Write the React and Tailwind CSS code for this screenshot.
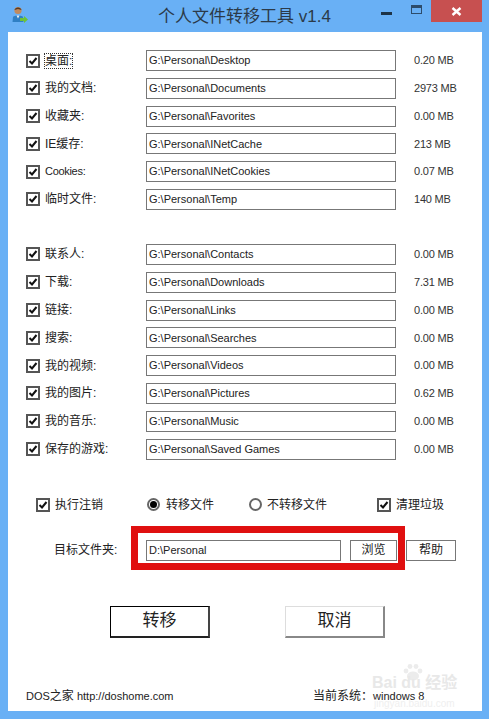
const CJK = "font-['Liberation_Sans','Noto_Sans_CJK_SC',sans-serif]";

const groupOne = [
  { label: "桌面:", path: "G:\\Personal\\Desktop", size: "0.20 MB", focused: true },
  { label: "我的文档:", path: "G:\\Personal\\Documents", size: "2973 MB" },
  { label: "收藏夹:", path: "G:\\Personal\\Favorites", size: "0.00 MB" },
  { label: "IE缓存:", path: "G:\\Personal\\INetCache", size: "213 MB" },
  { label: "Cookies:", path: "G:\\Personal\\INetCookies", size: "0.07 MB", latin: true },
  { label: "临时文件:", path: "G:\\Personal\\Temp", size: "140 MB" },
];

const groupTwo = [
  { label: "联系人:", path: "G:\\Personal\\Contacts", size: "0.00 MB" },
  { label: "下载:", path: "G:\\Personal\\Downloads", size: "7.31 MB" },
  { label: "链接:", path: "G:\\Personal\\Links", size: "0.00 MB" },
  { label: "搜索:", path: "G:\\Personal\\Searches", size: "0.00 MB" },
  { label: "我的视频:", path: "G:\\Personal\\Videos", size: "0.00 MB" },
  { label: "我的图片:", path: "G:\\Personal\\Pictures", size: "0.62 MB" },
  { label: "我的音乐:", path: "G:\\Personal\\Music", size: "0.00 MB" },
  { label: "保存的游戏:", path: "G:\\Personal\\Saved Games", size: "0.00 MB" },
];

function Check() {
  return (
    <span className="w-[14px] h-[14px] border-2 border-[#555] bg-white flex items-center justify-center shrink-0">
      <svg width="10" height="10" viewBox="0 0 10 10">
        <path d="M1.5 5 L4 7.5 L8.5 2" fill="none" stroke="#111" strokeWidth="2" />
      </svg>
    </span>
  );
}

function Radio({ on }) {
  return (
    <span className="w-[13px] h-[13px] rounded-full border-2 border-[#666] bg-white flex items-center justify-center shrink-0">
      {on && <span className="w-[7px] h-[7px] rounded-full bg-black" />}
    </span>
  );
}

function Row({ item }) {
  return (
    <div className="flex items-center h-[21px]">
      <Check />
      <span className={"ml-[5px] w-[101px] text-[#222] " + (item.latin ? "text-[11px] tracking-[-0.3px]" : "text-[12px]")}>
        <span className={item.focused ? "outline-1 outline-dotted outline-[#333]" : ""}>{item.label}</span>
      </span>
      <div className="w-[250px] h-[21px] border border-[#777] flex items-center pl-[2px] text-[11px] text-[#222]">
        {item.path}
      </div>
      <span className="ml-[18px] text-[11px] tracking-[-0.2px] text-[#333]">{item.size}</span>
    </div>
  );
}

export default function App() {
  return (
    <div className={"w-[489px] h-[719px] bg-[#69b0f5] flex flex-col overflow-hidden " + CJK}>
      {/* title bar */}
      <div className="h-[32px] shrink-0 flex items-start relative">
        <svg className="absolute left-[12px] top-[6px]" width="16" height="18" viewBox="0 0 16 18">
          <circle cx="6" cy="4.5" r="3.6" fill="#c08a5e" />
          <path d="M2.5 4 C3 0.5 9 0.5 9.5 4 L6 3 Z" fill="#5a3a22" />
          <path d="M0.5 16 L1 11 C2 9 10 9 11 11 L11.5 16 Z" fill="#2f7fc4" />
          <path d="M4.5 9.5 L6 12.5 L7.5 9.5 Z" fill="#f1f1f1" />
          <path d="M8 12 H12 V10 L16 13.5 L12 17 V15 H8 Z" fill="#6cc23a" />
        </svg>
        <div className="w-full text-center text-[17px] leading-none pt-[8px] text-[#2b3a49]">个人文件转移工具 v1.4</div>
        <span className="absolute left-[381px] top-[12px] w-[11px] h-[3px] bg-[#1d3346]" />
        <span className="absolute left-[411px] top-[5px] w-[11px] h-[9px] border border-[#2d4c6b] border-t-[3px]" />
        <span className="absolute left-[431px] top-0 w-[51px] h-[22px] bg-[#c75050] flex items-center justify-center">
          <svg width="11" height="9" viewBox="0 0 11 9">
            <path d="M1.5 1 L9.5 8 M9.5 1 L1.5 8" stroke="#fff" strokeWidth="2.4" />
          </svg>
        </span>
      </div>

      {/* client area */}
      <div className="relative ml-[8px] w-[474px] h-[679px] bg-white text-[12px] text-[#222]">
        <div className="pl-[18px] pt-[18px] flex flex-col gap-[6.8px]">
          {groupOne.map((item) => (
            <Row key={item.label} item={item} />
          ))}
        </div>
        <div className="pl-[18px] mt-[34px] flex flex-col gap-[6.8px]">
          {groupTwo.map((item) => (
            <Row key={item.label} item={item} />
          ))}
        </div>

        <div className="mt-[37px] h-[16px] flex items-center">
          <div className="ml-[28px] flex items-center gap-[5px]"><Check />执行注销</div>
          <div className="ml-[44px] flex items-center gap-[6px]"><Radio on />转移文件</div>
          <div className="ml-[35px] flex items-center gap-[5px]"><Radio />不转移文件</div>
          <div className="ml-[50px] flex items-center gap-[5px]"><Check />清理垃圾</div>
        </div>

        <div className="mt-[27px] flex items-center h-[21px] relative">
          <span className="ml-[46px] w-[92px]">目标文件夹:</span>
          <div className="w-[195px] h-[21px] border border-[#777] flex items-center pl-[2px] text-[11px]">D:\Personal</div>
          <button className="ml-[9px] w-[47px] h-[21px] border border-[#777] flex items-center justify-center">浏览</button>
          <button className="ml-[9px] w-[50px] h-[21px] border border-[#777] flex items-center justify-center">帮助</button>
          {/* red annotation */}
          <span className="absolute left-[123px] top-[-14px] w-[274px] h-[44px] border-[7px] border-[#e01010] pointer-events-none" />
        </div>

        <div className="mt-[45px] flex">
          <button className="ml-[102px] w-[100px] h-[32px] border border-black border-r-2 border-b-2 border-r-[#444] border-b-[#222] text-[17px] text-[#222] flex items-center justify-center">转移</button>
          <button className="ml-[75px] w-[100px] h-[32px] border border-[#ddd] border-r-2 border-b-2 border-r-[#888] border-b-[#888] text-[17px] text-[#222] flex items-center justify-center">取消</button>
        </div>

        <div className="mt-[50px] flex items-center h-[16px] text-[11px]">
          <span className="ml-[18px] w-[287px]">
            DOS<span className="text-[12px]">之家</span> http://doshome.com
          </span>
          <span>
            <span className="text-[12px]">当前系统：</span>windows 8
          </span>
        </div>

        {/* baidu watermark */}
        <svg className="absolute left-[394px] top-[631px] pointer-events-none" width="22" height="18" viewBox="0 0 22 18" fill="#ececec">
          <ellipse cx="11" cy="13" rx="6" ry="4.5" />
          <circle cx="4" cy="8" r="2.4" />
          <circle cx="8" cy="3.5" r="2.4" />
          <circle cx="14" cy="3.5" r="2.4" />
          <circle cx="18" cy="8" r="2.4" />
        </svg>
        <span className="absolute left-[364px] top-[643px] text-[16px] leading-none font-bold text-[#e8e8e8] pointer-events-none whitespace-nowrap">Bai du 经验</span>
        <span className="absolute left-[366px] top-[667px] text-[10px] leading-none text-[#efefef] pointer-events-none whitespace-nowrap">jingyan.baidu.com</span>
      </div>
    </div>
  );
}
